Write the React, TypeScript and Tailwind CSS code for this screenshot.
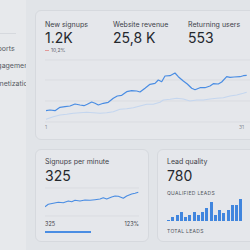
import React from 'react';

const mainLine =
  '1,53.7 5,53 10,53.7 15,50.3 20,49.7 25,49 30,47 35,48 39,48.7 42.3,47.3 46.7,45 50,46.3 53.3,48 58.3,46.3 63.3,45.3 68.3,41.3 72.3,39 76.7,38.3 81.7,34.7 86.7,33.7 91.7,34 95,35 100,31.3 105,27.3 110,26.3 113.3,23 116.7,24.7 120,19 125,18.7 130,16 133.3,19.7 138.3,24 142.3,27 146.7,31.3 150,32.7 155,30.7 160,30.7 165,29 168.3,26.7 173.3,27 176.7,25 181.7,19.7 185,20.3 189,20 195,19.7 198.3,18.7 201.7,18.3';

const prevLine =
  '1,62.3 8.3,59.7 15,58 21.7,57.3 28.3,56.3 35,55.7 41.7,55.3 48.3,55.7 55,56.3 61.7,55.7 68.3,54.7 75,52.3 81.7,51.7 88.3,50.7 95,49 101.7,47.3 108.3,47.3 115,45.3 118.3,43 125,42.3 131.7,41.3 138.3,42 145,44 151.7,43 158.3,43 165,42 171.7,41.3 178.3,40.7 185,39 191.7,38 198.3,36.3 201.7,35.3';

const sparkLine =
  '0,20.7 3.3,18.3 8.3,17.3 13.3,16.3 18.3,16.7 23.3,15 26.7,15.7 30,14.3 35,15 40,14 45,14.3 50,13.7 55,13 58.3,11.7 61.7,13 66.7,11 70,10 73.3,10.3 78.3,12.3 81.7,10 86.7,8 90,7.3 93.3,6.3';

const bars = [1.5, 4.3, 6, 8.7, 4.3, 6, 8.7, 5.7, 9.3, 12.7, 18.7, 6, 11, 7.7, 11, 16.3, 16.3, 21.7];

const stats = [
  { label: 'New signups', value: '1.2K', change: '10,2%', width: 'w-[68px]' },
  { label: 'Website revenue', value: '25,8 K', width: 'w-[75px]' },
  { label: 'Returning users', value: '553', width: 'w-[60px]' },
];

export default function App() {
  return (
    <div className="flex h-[250px] w-[250px] overflow-hidden bg-[#e1e4e8] font-['Inter',sans-serif] text-[#2c3036]">
      {/* sidebar, cut off on the left */}
      <div className="h-full w-[26px] shrink-0 overflow-hidden bg-[#e7e9ec] pr-[10px]">
        <div className="-ml-[11px] whitespace-nowrap text-[7px] text-[#555a62]">
          <div className="mt-[33px] h-px bg-[#d6d9de]" />
          <div className="mt-[6px] flex h-[17.5px] items-center">Reports</div>
          <div className="flex h-[17.5px] items-center">Engagement</div>
          <div className="flex h-[17.5px] items-center">Monetization</div>
        </div>
      </div>

      {/* main */}
      <div className="shrink-0 pl-[9px] pt-[10px]">
        <div className="h-[130px] w-[236px] rounded-[6px] border border-[#d6d9de] bg-[#e5e7eb] px-[9px] pt-[9px]">
          <div className="flex">
            {stats.map((s) => (
              <div key={s.label} className={s.width}>
                <div className="text-[7px] leading-[9px] text-[#3d4148]">{s.label}</div>
                <div className="mt-[1px] text-[14px] leading-[16px] text-[#24282e]">{s.value}</div>
                {s.change && (
                  <div className="mt-[1px] flex items-center gap-[2px] text-[5px] leading-[6px] text-[#5d626a]">
                    <span className="h-[1px] w-[4px] bg-[#e29a9a]" />
                    {s.change}
                  </div>
                )}
              </div>
            ))}
          </div>
          <svg width="216" height="66" className="mt-[4px] block">
            {[3, 23, 44, 65].map((y) => (
              <line key={y} x1="0" x2="216" y1={y} y2={y} stroke="#d5d8dd" strokeWidth="0.7" />
            ))}
            <polyline points={prevLine} fill="none" stroke="#c4d6ef" strokeWidth="1.1" strokeLinejoin="round" />
            <polyline points={mainLine} fill="none" stroke="#4a8de3" strokeWidth="1.2" strokeLinejoin="round" />
          </svg>
          <div className="mt-[1px] flex w-[199px] justify-between text-[5px] leading-[6px] text-[#8a8f96]">
            <span>1</span>
            <span>31</span>
          </div>
        </div>

        <div className="mt-[9px] flex gap-[8px]">
          <div className="h-[93px] w-[114px] rounded-[6px] border border-[#d6d9de] bg-[#e5e7eb] px-[9px] pt-[6.5px]">
            <div className="text-[7px] leading-[9px] text-[#3d4148]">Signups per minute</div>
            <div className="mt-[2.5px] text-[14px] leading-[16px] text-[#24282e]">325</div>
            <svg width="94" height="32" className="mt-[2px] block">
              {[2, 30].map((y) => (
                <line key={y} x1="0" x2="94" y1={y} y2={y} stroke="#d5d8dd" strokeWidth="0.7" />
              ))}
              <polyline points={sparkLine} fill="none" stroke="#4a8de3" strokeWidth="1.1" strokeLinejoin="round" />
            </svg>
            <div className="mt-[3px] flex w-[94px] justify-between text-[5.5px] leading-[6px] text-[#3d4148]">
              <span>325</span>
              <span>123%</span>
            </div>
            <div className="mt-[4px] h-[1.5px] w-[46px] bg-[#4a8de3]" />
          </div>

          <div className="h-[93px] w-[114px] rounded-[6px] border border-[#d6d9de] bg-[#e5e7eb] px-[9px] pt-[6.5px]">
            <div className="text-[7px] leading-[9px] text-[#3d4148]">Lead quality</div>
            <div className="mt-[2px] text-[14px] leading-[16px] text-[#24282e]">780</div>
            <div className="mt-[6px] text-[5px] uppercase leading-[6px] tracking-[0.3px] text-[#50555d]">Qualified leads</div>
            <div className="mt-[3.5px] flex h-[22px] items-end gap-[1.25px]">
              {bars.map((h, i) => (
                <div key={i} className="w-[3px] bg-[#4186de]" style={{ height: `${h}px` }} />
              ))}
            </div>
            <div className="mt-[6.5px] text-[5px] uppercase leading-[6px] tracking-[0.3px] text-[#50555d]">Total leads</div>
          </div>
        </div>
      </div>
    </div>
  );
}
